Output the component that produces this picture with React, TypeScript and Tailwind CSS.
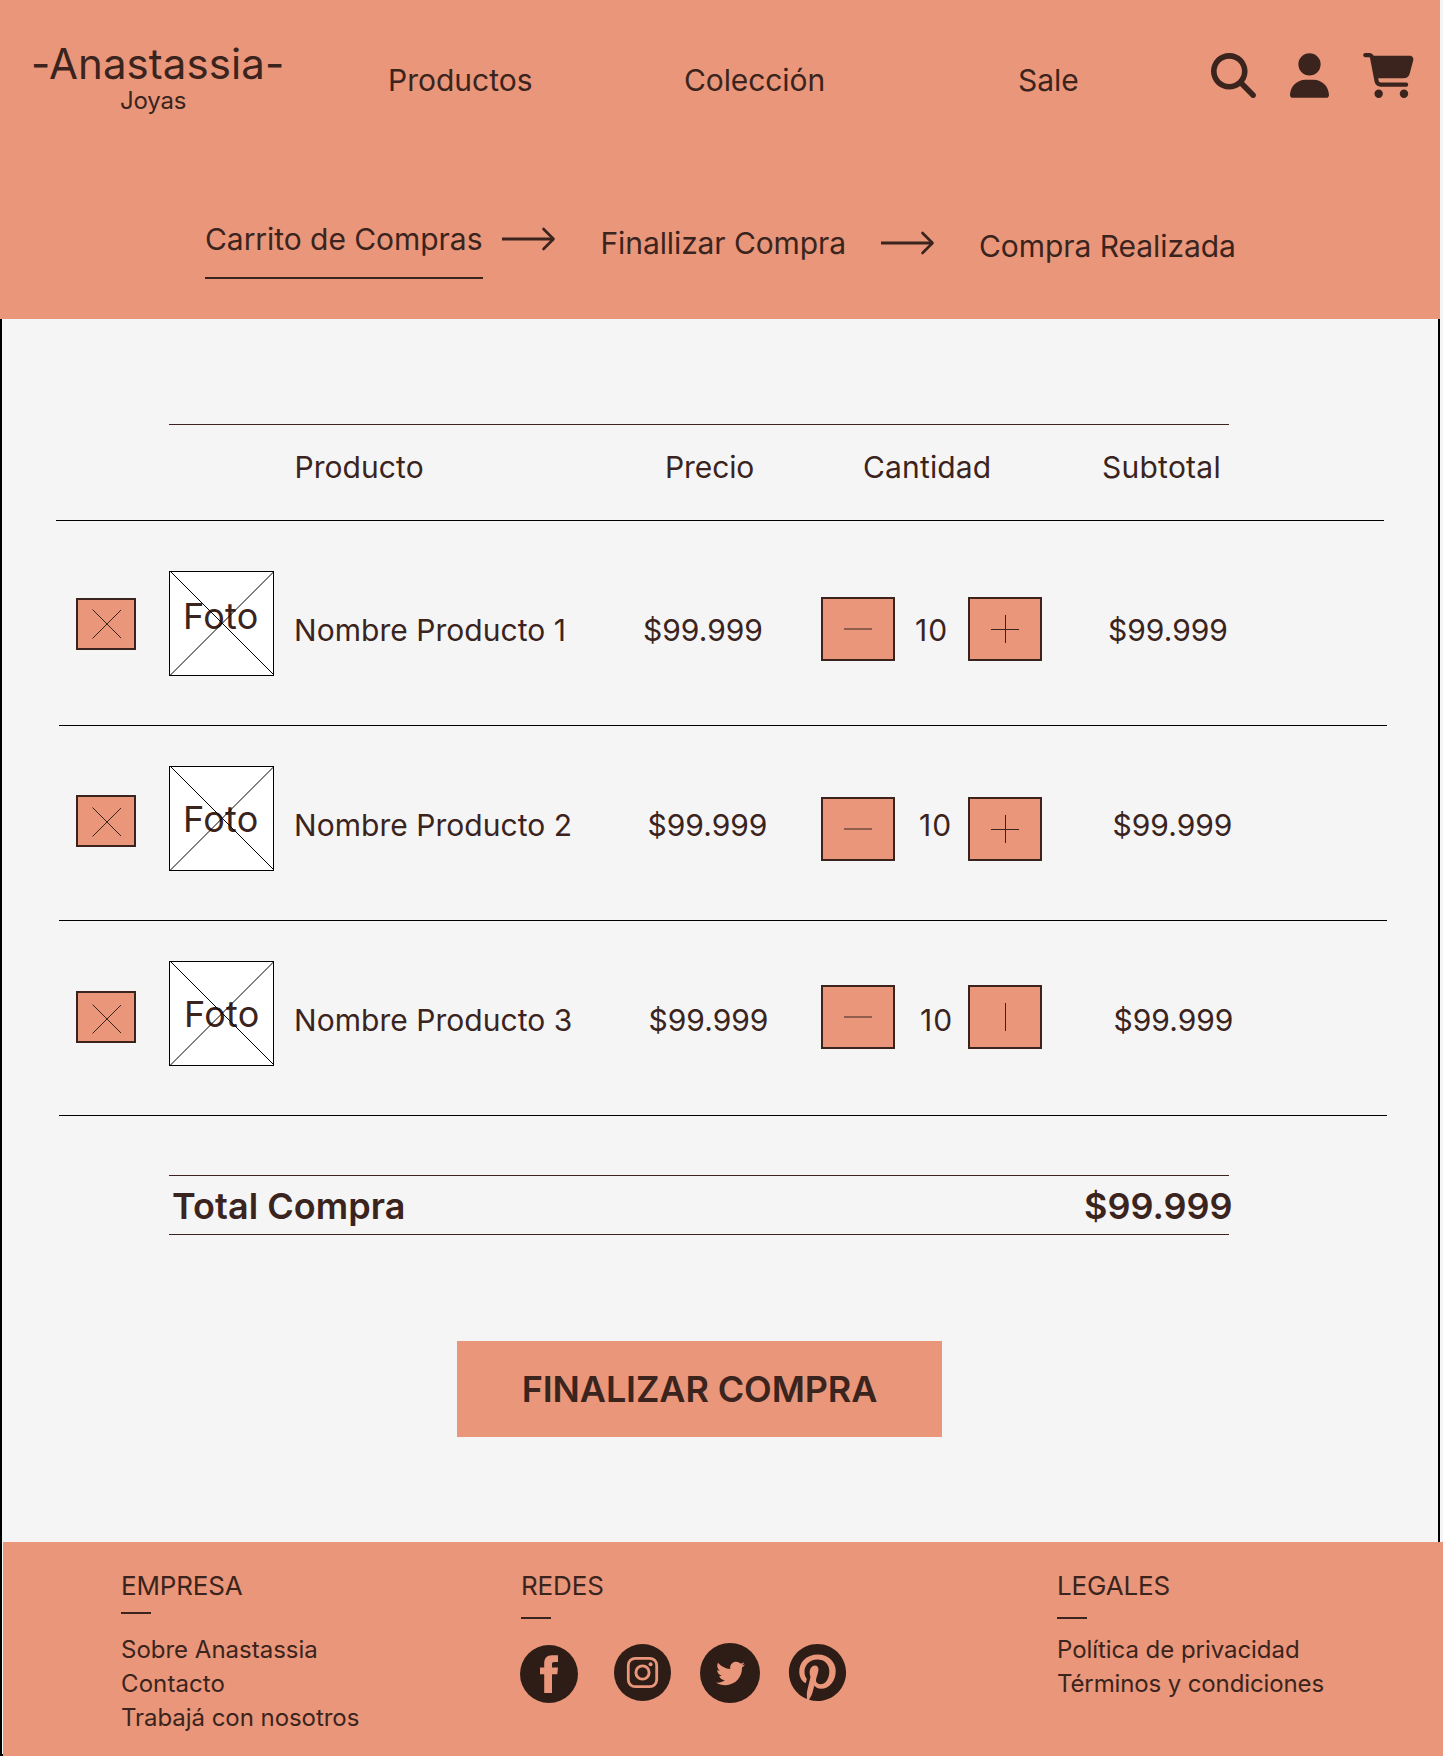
import { FaCartShopping, FaMagnifyingGlass, FaPinterest, FaTwitter, FaUser } from 'react-icons/fa6';

type Row = {
  name: string;
  height: string;
  remove: string;
  cross: string;
  photo: string;
  caption: string;
  text: string;
  price: string;
  qty: string;
  buttons: string;
  subtotal: string;
  fullPlus: boolean;
};

const rows: Row[] = [
  {
    name: 'Nombre Producto 1',
    height: 'h-[205px]',
    remove: 'mt-[77px]',
    cross: 'mt-[9px]',
    photo: 'mt-[50px]',
    caption: 'pt-[22px] pl-[13px]',
    text: 'mt-[91px]',
    price: 'pl-0',
    qty: 'pl-px',
    buttons: 'mt-[76px]',
    subtotal: 'pl-px',
    fullPlus: true,
  },
  {
    name: 'Nombre Producto 2',
    height: 'h-[195px]',
    remove: 'mt-[69px]',
    cross: 'mt-[10px]',
    photo: 'mt-[40px]',
    caption: 'pt-[30px] pl-[13px]',
    text: 'mt-[81px]',
    price: 'pl-[4.5px]',
    qty: 'pl-[5px]',
    buttons: 'mt-[71px]',
    subtotal: 'pl-[5.5px]',
    fullPlus: true,
  },
  {
    name: 'Nombre Producto 3',
    height: 'h-[195px]',
    remove: 'mt-[70px]',
    cross: 'mt-[11px]',
    photo: 'mt-[40px]',
    caption: 'pt-[30px] pl-[14px]',
    text: 'mt-[81px]',
    price: 'pl-[5.5px]',
    qty: 'pl-[6px]',
    buttons: 'mt-[64px]',
    subtotal: 'pl-[6.5px]',
    fullPlus: false,
  },
];

function StepArrow({ className }: { className: string }) {
  return (
    <svg
      className={`h-6 w-[54px] ${className}`}
      viewBox="0 0 54 24"
      fill="none"
      stroke="currentColor"
      strokeWidth="3"
    >
      <path d="M0 12H52" />
      <path d="M41.5 2L51.5 12L41.5 22" strokeLinecap="round" strokeLinejoin="round" strokeWidth="2.6" />
    </svg>
  );
}

function CartRow({ row }: { row: Row }) {
  return (
    <div
      className={`ml-[59px] grid w-[1328px] grid-cols-[93px_125px_349px_178px_93px_54px_139px_1fr] items-start border-b border-black pl-[17px] ${row.height}`}
    >
      <button className={`flex h-[52px] w-[60px] justify-center border-2 border-[#3a241d] bg-[#e9967a] ${row.remove}`}>
        <svg className={`ml-px h-[30px] w-[30px] ${row.cross}`} viewBox="0 0 30 30" stroke="currentColor">
          <path d="M.5 .5L29 29M.5 29.5L29 1" />
        </svg>
      </button>
      <div className={`relative h-[105px] w-[105px] border border-black bg-white ${row.photo}`}>
        <p className={`text-[36px] leading-[44px] tracking-[.3px] ${row.caption}`}>Foto</p>
        <svg className="absolute -top-px -left-px h-[105px] w-[105px]" viewBox="0 0 105 105" stroke="#000">
          <path d="M1 0L105 104M1 104.5L105 .5" />
        </svg>
      </div>
      <span className={`tracking-[.04px] ${row.text}`}>{row.name}</span>
      <span className={`${row.text} ${row.price}`}>$99.999</span>
      <button
        className={`flex h-16 w-[74px] items-start justify-center border-2 border-[#3a241d] bg-[#e9967a] pt-[29px] ${row.buttons}`}
      >
        <span className="h-[2px] w-7 bg-[#3a241d]/50" />
      </button>
      <span className={`tracking-[1px] ${row.text} ${row.qty}`}>10</span>
      <button
        className={`flex h-16 w-[74px] items-start justify-center border-2 border-[#3a241d] bg-[#e9967a] pt-4 ${row.buttons}`}
      >
        <svg className="h-7 w-7" viewBox="0 0 28 28" stroke="currentColor">
          <path d={row.fullPlus ? 'M14.5 0V28M0 14.5H28' : 'M14.5 0V28'} />
        </svg>
      </button>
      <span className={`${row.text} ${row.subtotal}`}>$99.999</span>
    </div>
  );
}

function Facebook() {
  return (
    <svg className="mt-[2px] h-[58px] w-[58px]" viewBox="0 0 58 58">
      <circle cx="29" cy="29" r="29" fill="#2e1d17" />
      <path
        d="M24.2 48V29.2H20V22.5H24.2V18.5C24.2 13 27 10.2 32 10.2H38V17H34.2C32.6 17 32 17.8 32 19.2V22.5H38L37.3 29.2H32V48Z"
        fill="#e9967a"
      />
    </svg>
  );
}

function Instagram() {
  return (
    <svg className="mt-px ml-9 h-[57px] w-[57px]" viewBox="0 0 57 57">
      <circle cx="28.5" cy="28.5" r="28.5" fill="#2e1d17" />
      <g fill="none" stroke="#e9967a">
        <rect x="14.3" y="14.3" width="28.4" height="28.4" rx="7" strokeWidth="2.8" />
        <circle cx="28.5" cy="28.5" r="6.6" strokeWidth="2.9" />
      </g>
      <circle cx="36.6" cy="20.2" r="2" fill="#e9967a" />
    </svg>
  );
}

export default function App() {
  return (
    <div className="h-[1756px] w-[1443px] overflow-hidden bg-[#f5f5f5] font-['Inter',sans-serif] text-[30px] leading-9 whitespace-nowrap text-[#3a241d]">
      <div className="h-full w-[1440px] border-2 border-black">
        <header className="-mt-[2px] -ml-[2px] h-[319px] w-[1440px] bg-[#e9967a]">
          <div className="flex h-[199px] items-start">
            <div className="w-[388px] pt-[38px] pl-[31px]">
              <p className="text-[42px] leading-[51px] tracking-[.08px]">-Anastassia-</p>
              <p className="-mt-[3px] pl-[89px] text-2xl leading-[29px] tracking-[-.2px]">Joyas</p>
            </div>
            <nav className="flex pt-[62px]">
              <a className="w-[296px]">Productos</a>
              <a className="w-[334px] tracking-[-.1px]">Colección</a>
              <a className="w-[193px]">Sale</a>
            </nav>
            <div className="flex pt-[53px]">
              <FaMagnifyingGlass className="h-[45px] w-[45px]" />
              <FaUser className="ml-[34px] h-[45px] w-[39px]" />
              <FaCartShopping className="ml-[34px] h-[45px] w-[51px]" />
            </div>
          </div>
          <div className="flex items-start pl-[205px]">
            <span className="mt-[22px] h-[58px] w-[278px] border-b-2 border-[#3a241d] tracking-[-.05px]">
              Carrito de Compras
            </span>
            <StepArrow className="mt-7 ml-[19px]" />
            <span className="mt-[26px] ml-[44.5px] w-[280.5px] tracking-[-.1px]">Finallizar Compra</span>
            <StepArrow className="mt-8" />
            <span className="mt-[29px] ml-[44px] tracking-[-.06px]">Compra Realizada</span>
          </div>
        </header>

        <main className="-ml-[2px] h-[1223px] w-[1440px] pt-[105px]">
          <div className="ml-[169px] w-[1060px] border-t border-[#3a241d]" />
          <div className="ml-14 flex h-24 w-[1328px] border-b border-black pt-6">
            <span className="ml-[238.5px] w-[370.5px] tracking-[.06px]">Producto</span>
            <span className="w-[198px] tracking-[-.1px]">Precio</span>
            <span className="w-[239px] tracking-[.15px]">Cantidad</span>
            <span className="tracking-[.25px]">Subtotal</span>
          </div>
          {rows.map((row) => (
            <CartRow key={row.name} row={row} />
          ))}
          <div className="mt-[59px] ml-[169px] flex h-[60px] w-[1060px] border-y border-[#3a241d] pt-[8px] pl-[3px] text-[36px] leading-[44px] font-semibold">
            <span className="w-[912px] shrink-0 tracking-[.05px]">Total Compra</span>
            <span>$99.999</span>
          </div>
          <button className="mt-[106px] ml-[457px] h-24 w-[485px] bg-[#e9967a] text-[36px] leading-[44px] font-semibold tracking-[-.12px]">
            FINALIZAR COMPRA
          </button>
        </main>

        <footer className="ml-px flex h-[214px] w-[1440px] items-start bg-[#e9967a] text-2xl leading-[34px]">
          <section className="ml-[118px] w-[400px]">
            <h2 className="mt-7 text-[26px] leading-8 tracking-[-.15px]">EMPRESA</h2>
            <div className="mt-[10px] h-[2px] w-[30px] bg-[#3a241d]" />
            <ul className="mt-[19px]">
              <li>Sobre Anastassia</li>
              <li className="tracking-[.1px]">Contacto</li>
              <li className="tracking-[-.05px]">Trabajá con nosotros</li>
            </ul>
          </section>
          <section className="w-[536px]">
            <h2 className="mt-7 text-[26px] leading-8 tracking-[-.15px]">REDES</h2>
            <div className="mt-[15px] h-[2px] w-[30px] bg-[#3a241d]" />
            <div className="mt-6 -ml-px flex items-start">
              <Facebook />
              <Instagram />
              <div className="ml-[29px] flex h-[60px] w-[60px] items-center justify-center rounded-full bg-[#2e1d17]">
                <FaTwitter className="h-[29px] w-[29px] text-[#e9967a]" />
              </div>
              <FaPinterest className="ml-[28px] h-[59px] w-[59px] text-[#2e1d17]" />
            </div>
          </section>
          <section>
            <h2 className="mt-7 text-[26px] leading-8 tracking-[-.15px]">LEGALES</h2>
            <div className="mt-[15px] h-[2px] w-[30px] bg-[#3a241d]" />
            <ul className="mt-[14px]">
              <li className="tracking-[-.05px]">Política de privacidad</li>
              <li className="tracking-[-.12px]">Términos y condiciones</li>
            </ul>
          </section>
        </footer>
      </div>
    </div>
  );
}
